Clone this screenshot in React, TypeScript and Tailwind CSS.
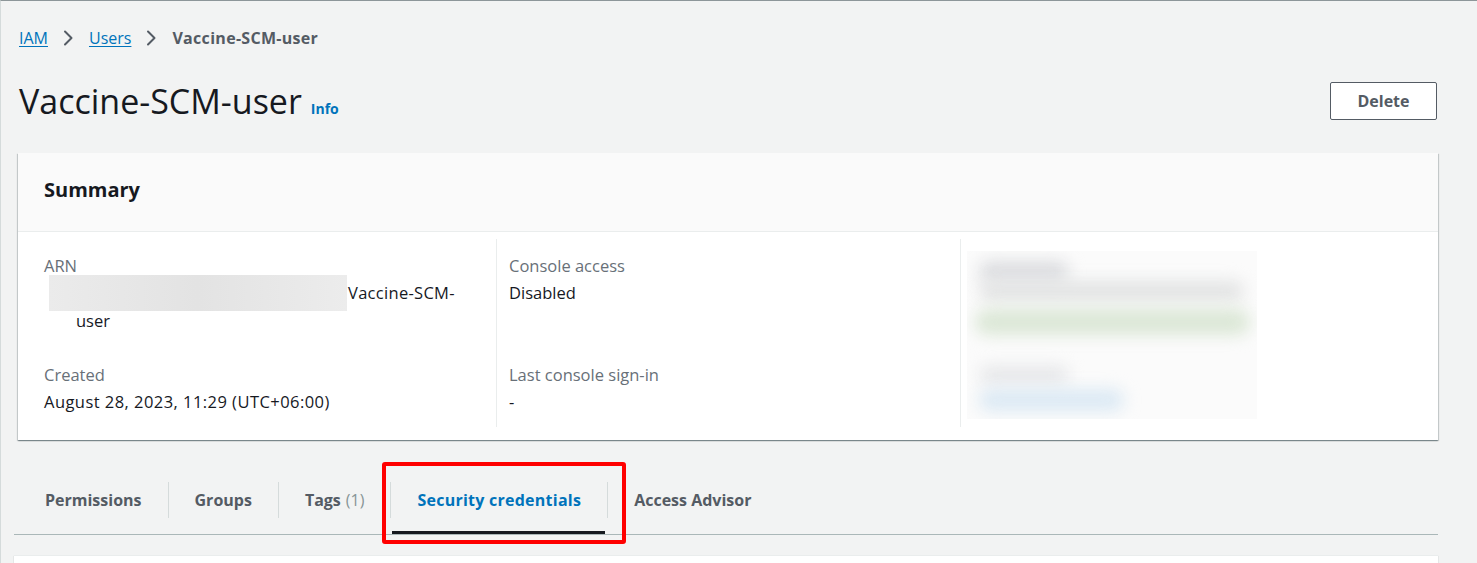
import React from "react";

// IAM user detail page, Summary card + tab strip

function Chevron() {
  return (
    <svg className="mx-[15px] h-[16px] w-[11px] text-[#545b64]" viewBox="0 0 11 16" fill="none" stroke="currentColor" strokeWidth={2}>
      <path d="M2 1.5 L8.5 8 L2 14.5" strokeLinecap="round" strokeLinejoin="round" />
    </svg>
  );
}

function Field({ label, children, className = "", valueClass = "" }: { label: string; children: React.ReactNode; className?: string; valueClass?: string }) {
  return (
    <div className={className}>
      <div className="text-[16.5px] leading-[20px] text-[#687078]">{label}</div>
      <div className={`mt-[7px] text-[16.5px] leading-[20px] text-[#16191f] ${valueClass}`}>{children}</div>
    </div>
  );
}

const tabs = [
  { label: "Permissions" },
  { label: "Groups" },
  { label: "Tags", count: "(1)" },
  { label: "Security credentials", active: true },
  { label: "Access Advisor" },
];

export default function App() {
  return (
    <div
      className="min-h-screen overflow-hidden border-t border-l border-t-[#8d9699] border-l-[#d5dbdb] bg-[#f2f3f3] pl-[17px] pr-[39px]"
      style={{ fontFamily: "'Open Sans', Roboto, sans-serif" }}
    >
      {/* Breadcrumb */}
      <nav className="flex items-center pt-[27px] pl-[1px] text-[16px] leading-[20px]">
        <a className="text-[#0073bb] underline underline-offset-2">IAM</a>
        <Chevron />
        <a className="text-[#0073bb] underline underline-offset-2">Users</a>
        <Chevron />
        <span className="font-bold tracking-[0.3px] text-[#545b64]">Vaccine-SCM-user</span>
      </nav>

      {/* Header */}
      <div className="mt-[32px] flex min-h-[42px] items-center justify-between pl-[1px]">
        <div className="flex items-baseline">
          <h1 className="text-[34px] leading-[40px] font-normal text-[#16191f]">Vaccine-SCM-user</h1>
          <a className="ml-[9px] text-[14px] font-bold text-[#0073bb]">Info</a>
        </div>
        <button className="mr-[1px] h-[38px] w-[107px] rounded-[2px] border border-[#545b64] bg-white text-[16px] font-bold text-[#545b64]">
          Delete
        </button>
      </div>

      {/* Summary card */}
      <section className="mt-[31px] bg-white shadow-[0_1px_1px_0_rgba(0,28,36,0.3),1px_1px_1px_0_rgba(0,28,36,0.15),-1px_1px_1px_0_rgba(0,28,36,0.15)]">
        <div className="flex h-[79px] items-center border-b border-[#eaeded] bg-[#fafafa] px-[26px] pb-[4px]">
          <h2 className="text-[20px] leading-[24px] font-bold text-[#16191f]">Summary</h2>
        </div>
        <div className="flex px-[26px] pt-[7px] pb-[13px]">
          <div className="flex w-[452px] flex-col gap-[34px] pt-[17px]">
            <div>
              <div className="text-[16.5px] leading-[20px] text-[#687078]">ARN</div>
              <div className="-mt-[1px] flex h-[36px] items-center text-[16.5px] leading-[20px] text-[#16191f]">
                <div className="ml-[5px] h-[36px] w-[298px] bg-gradient-to-r from-[#ebebeb] via-[#e3e3e3] to-[#ececec]" />
                <span className="ml-[1px] tracking-[0.3px]">Vaccine-SCM-</span>
              </div>
              <div className="pl-[32px] text-[16.5px] leading-[20px] text-[#16191f]">user</div>
            </div>
            <Field label="Created" valueClass="tracking-[0.45px]">August 28, 2023, 11:29 (UTC+06:00)</Field>
          </div>

          <div className="flex w-[464px] flex-col gap-[34px] border-l border-[#eaeded] pt-[17px] pl-[12px]">
            <Field label="Console access" className="min-h-[75px]">Disabled</Field>
            <Field label="Last console sign-in">-</Field>
          </div>

          <div className="flex-1 border-l border-[#eaeded] pt-[12px] pb-[8px] pl-[6px]">
            <div className="relative h-[168px] w-[290px] overflow-hidden bg-[#fbfbfb]">
              <div className="absolute left-[12px] top-[10px] h-[22px] w-[90px] rounded-full bg-[#dcdde0] blur-[8px]" />
              <div className="absolute left-[12px] top-[30px] h-[20px] w-[265px] rounded-full bg-[#e2e3e3] blur-[8px]" />
              <div className="absolute left-[8px] top-[58px] h-[26px] w-[275px] rounded-full bg-[#dbe7d6] blur-[8px]" />
              <div className="absolute left-[12px] top-[115px] h-[18px] w-[90px] rounded-full bg-[#e6e7e9] blur-[8px]" />
              <div className="absolute left-[12px] top-[138px] h-[22px] w-[145px] rounded-full bg-[#dbe9f4] blur-[8px]" />
            </div>
          </div>
        </div>
      </section>

      {/* Tabs */}
      <div className="relative -ml-[4px] mt-[23px] flex h-[72px] items-center border-b border-[#aab7b8] pl-[5px] pt-[2px]">
        {tabs.map((t, i) => (
          <React.Fragment key={t.label}>
            {i > 0 && <div className="h-[36px] w-px bg-[#d5dbdb]" />}
            <div className="relative flex h-full items-center px-[26px] text-[16px] font-bold">
              <span className={t.active ? "tracking-[0.25px] text-[#0073bb]" : "text-[#545b64]"}>
                {t.label}
                {t.count && <span className="ml-[5px] font-normal text-[#879596]">{t.count}</span>}
              </span>
              {t.active && <div className="absolute right-[2px] bottom-0 left-[1px] h-[3px] bg-[#16191f]" />}
            </div>
          </React.Fragment>
        ))}
        {/* annotation box */}
        <div className="pointer-events-none absolute top-[-1px] left-[368px] h-[82px] w-[244px] rounded-[3px] border-[4px] border-[#ff0000]" />
      </div>

      {/* Next card */}
      <div className="-ml-[4px] mt-[20px] h-[60px] border-t border-[#eaeded] bg-white shadow-[0_1px_1px_0_rgba(0,28,36,0.3)]" />
    </div>
  );
}
